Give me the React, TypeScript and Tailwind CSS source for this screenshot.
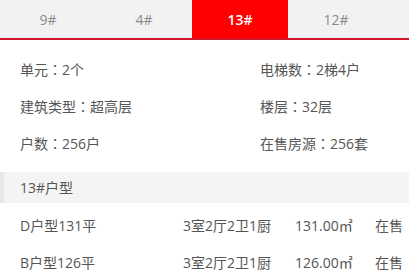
import React from 'react';

const tabs = ['9#', '4#', '13#', '12#'];

const info = [
  ['单元：2个', '电梯数：2梯4户'],
  ['建筑类型：超高层', '楼层：32层'],
  ['户数：256户', '在售房源：256套'],
];

const units = [
  { name: 'D户型131平', layout: '3室2厅2卫1厨', area: '131.00㎡', status: '在售' },
  { name: 'B户型126平', layout: '3室2厅2卫1厨', area: '126.00㎡', status: '在售' },
];

// centred full-width colon, like the YaHei rendering in the original
const Label: React.FC<{ text: string; className?: string }> = ({ text, className }) => {
  const [k, v] = text.split('：');
  return (
    <span className={className}>
      {k}
      <span style={{ fontFamily: '"Noto Sans CJK TC", sans-serif' }}>：</span>
      {v}
    </span>
  );
};

const App: React.FC = () => {
  return (
    <div
      className="w-[409px] h-[278px] overflow-hidden bg-white text-[14px] text-[#555]"
      style={{ fontFamily: '"Open Sans", "Noto Sans CJK SC", sans-serif' }}
    >
      {/* tab bar */}
      <div className="flex h-[40px] bg-[#f2f2f2] border-b-2 border-[#d2142d]">
        {tabs.map((t) => (
          <div
            key={t}
            className={
              t === '13#'
                ? 'w-[96px] flex items-center justify-center bg-[#ff0000] text-white font-semibold'
                : 'w-[96px] flex items-center justify-center text-[#8a8a8a]'
            }
          >
            {t}
          </div>
        ))}
      </div>

      {/* building info */}
      <div className="px-[20px] pt-[19px] flex flex-col gap-[17px]">
        {info.map(([a, b]) => (
          <div key={a} className="flex h-[20px] items-center leading-[20px] whitespace-nowrap">
            <Label text={a} className="w-[240px] shrink-0" />
            <Label text={b} />
          </div>
        ))}
      </div>

      {/* section header */}
      <div className="mt-[19px] h-[31px] flex bg-[#f4f4f4]">
        <div className="w-[4px] bg-[#e8e8e8]" />
        <div className="pl-[16px] flex items-center">13#户型</div>
      </div>

      {/* unit list */}
      <div className="pl-[20px] pt-[13px] flex flex-col gap-[17px]">
        {units.map((u) => (
          <div key={u.name} className="flex h-[20px] items-center leading-[20px] whitespace-nowrap">
            <span className="w-[163px] shrink-0">{u.name}</span>
            <span className="w-[112px] shrink-0">{u.layout}</span>
            <span className="w-[80px] shrink-0">{u.area}</span>
            <span className="shrink-0">{u.status}</span>
          </div>
        ))}
      </div>
    </div>
  );
};

export default App;
